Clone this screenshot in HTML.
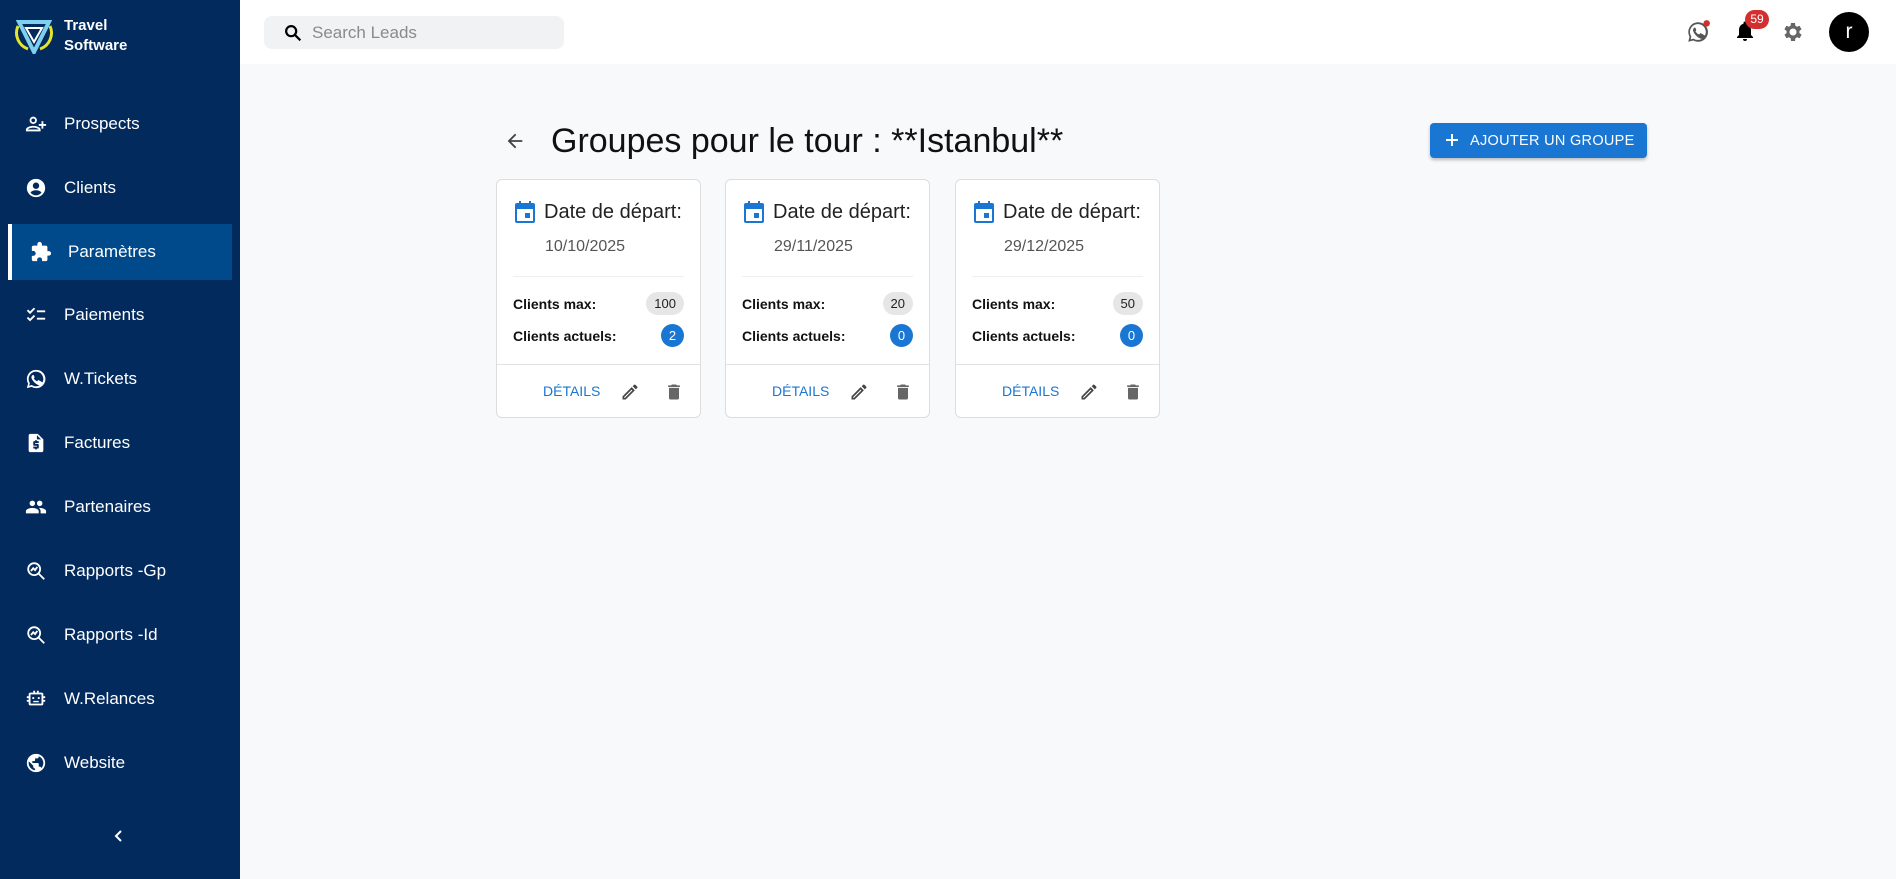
<!DOCTYPE html>
<html><head><meta charset="utf-8"><style>
*{box-sizing:border-box;margin:0;padding:0}
body{width:1896px;height:879px;overflow:hidden;font-family:"Liberation Sans",Arial,sans-serif;background:#f8f9fb;position:relative}
.sb{position:absolute;left:0;top:0;width:240px;height:879px;background:#022a5c;color:#fff}
.logo{position:absolute;left:14px;top:14px}
.brand{position:absolute;left:64px;top:16px;font-weight:bold;font-size:15px;line-height:20px}
.nav{position:absolute;left:0;width:240px;height:56px;display:flex;align-items:center}
.nav svg{position:absolute;left:25px;width:22px;height:22px;fill:#fff}
.nav span{position:absolute;left:64px;font-size:17px}
.act{left:8px;width:224px;background:#004a8b;border-left:4px solid #fff}
.act svg{left:18px}.act span{left:56px}
.hdr{position:absolute;left:240px;top:0;right:0;height:64px;background:#fff}
.search{position:absolute;left:264px;top:16px;width:300px;height:33px;background:#f1f2f4;border-radius:8px}
.search span{position:absolute;left:48px;top:7px;font-size:17px;color:#8a8a8a}
.title{position:absolute;left:551px;top:122px;font-size:34px;color:#111}
.btn{position:absolute;left:1430px;top:123px;width:217px;height:35px;background:#1976d2;border-radius:4px;color:#fff;font-size:14.5px;box-shadow:0 2px 3px rgba(0,0,0,.25)}
.btn span{position:absolute;left:40px;top:10px;letter-spacing:.3px}
.card{position:absolute;top:179px;width:205px;height:239px;background:#fff;border:1px solid #ddd;border-radius:6px}
.card .cal{position:absolute;left:18px;top:21px}
.card .dl{position:absolute;left:47px;top:21px;font-size:20px;color:#222}
.card .dt{position:absolute;left:48px;top:58px;font-size:16px;color:#555}
.card .hr1{position:absolute;left:16px;right:16px;top:96px;border-top:1px solid #eee}
.card .l{position:absolute;left:16px;font-weight:bold;font-size:14px;color:#111}
.chip{position:absolute;right:16px;height:23px;border-radius:12px;font-size:13px;text-align:center;line-height:23px}
.g{background:#e6e6e6;color:#222;padding:0 8px}
.b{background:#1976d2;color:#fff;width:23px}
.card .hr2{position:absolute;left:0;right:0;top:184px;border-top:1px solid #e2e2e2}
.card .det{position:absolute;left:46px;top:203px;font-size:14px;color:#1976d2}
.card .pen{position:absolute;left:123px;top:202px}
.card .tr{position:absolute;left:167px;top:202px}
</style></head><body>
<div class="sb">
<svg class="logo" width="40" height="40" viewBox="0 0 40 40"><path d="M4 12 A17 17 0 0 0 14 35" stroke="#e5e52a" stroke-width="3" fill="none"/><path d="M36 12 A17 17 0 0 1 26 35" stroke="#e5e52a" stroke-width="3" fill="none"/><path d="M5 8 L35 8 L20 38 Z" fill="none" stroke="#7fd0ee" stroke-width="4"/><path d="M12 14 L28 14 L20 28Z" fill="#022a5c" stroke="#fff" stroke-width="2"/></svg>
<div class="brand">Travel<br>Software</div>
<div class="nav" style="top:96px"><svg viewBox="0 0 24 24"><path d="M9 12a4 4 0 1 0 0-8 4 4 0 0 0 0 8zm0-6a2 2 0 1 1 0 4 2 2 0 0 1 0-4zm0 8c-2.7 0-8 1.3-8 4v2h16v-2c0-2.7-5.3-4-8-4zm-6 4c.2-.7 3.3-2 6-2s5.8 1.3 6 2H3zm17-6V9h-2v3h-3v2h3v3h2v-3h3v-2z"/></svg><span>Prospects</span></div>
<div class="nav" style="top:160px"><svg viewBox="0 0 24 24"><path d="M12 2a10 10 0 1 0 0 20 10 10 0 0 0 0-20zm0 4a3.5 3.5 0 1 1 0 7 3.5 3.5 0 0 1 0-7zm0 14c-2.5 0-4.7-1.3-6-3.2 1.3-1.5 4-2.3 6-2.3s4.7.8 6 2.3c-1.3 1.9-3.5 3.2-6 3.2z"/></svg><span>Clients</span></div>
<div class="nav act" style="top:224px"><svg viewBox="0 0 24 24"><path d="M20.5 11H19V7a2 2 0 0 0-2-2h-4V3.5a2.5 2.5 0 0 0-5 0V5H4a2 2 0 0 0-2 2v3.8h1.5a2.7 2.7 0 0 1 0 5.4H2V20a2 2 0 0 0 2 2h3.8v-1.5a2.7 2.7 0 0 1 5.4 0V22H17a2 2 0 0 0 2-2v-4h1.5a2.5 2.5 0 0 0 0-5z"/></svg><span>Paramètres</span></div>
<div class="nav" style="top:287px"><svg viewBox="0 0 24 24"><path d="M22 7h-9v2h9V7zm0 8h-9v2h9v-2zM5.5 11 2 7.5 3.4 6l2.1 2.1 4.2-4.2 1.4 1.4-5.6 5.7zm0 8L2 15.5 3.4 14l2.1 2.1 4.2-4.2 1.4 1.4-5.6 5.7z"/></svg><span>Paiements</span></div>
<div class="nav" style="top:351px"><svg viewBox="0 0 24 24"><path d="M12 2a10 10 0 0 0-8.6 15L2 22l5.2-1.4A10 10 0 1 0 12 2zm0 18a8 8 0 0 1-4.2-1.2l-.3-.2-3 .8.8-3-.2-.3A8 8 0 1 1 12 20zm4.4-6c-.2-.1-1.4-.7-1.7-.8-.2-.1-.4-.1-.5.1l-.8 1c-.1.2-.3.2-.5.1a6.5 6.5 0 0 1-3.2-2.8c-.2-.4.2-.4.7-1.3.1-.2 0-.3 0-.4l-.8-1.8c-.2-.5-.4-.4-.5-.4h-.5a.9.9 0 0 0-.7.3A2.8 2.8 0 0 0 7 10c0 1.6 1.2 3.2 1.3 3.4.2.2 2.3 3.5 5.5 4.9 2 .9 2.8.9 3.8.8.6-.1 1.800-.8 2-1.5.3-.7.3-1.3.2-1.5l-.4-.1z"/></svg><span>W.Tickets</span></div>
<div class="nav" style="top:415px"><svg viewBox="0 0 24 24"><path d="M14 2H6a2 2 0 0 0-2 2v16a2 2 0 0 0 2 2h12a2 2 0 0 0 2-2V8l-6-6zm1 10h-4v1h3a1 1 0 0 1 1 1v3a1 1 0 0 1-1 1h-1v1h-2v-1H9v-2h4v-1h-3a1 1 0 0 1-1-1v-3a1 1 0 0 1 1-1h1V9h2v1h2v2zm-2-4V3.5L17.5 8H13z"/></svg><span>Factures</span></div>
<div class="nav" style="top:479px"><svg viewBox="0 0 24 24"><path d="M16 11a3 3 0 1 0 0-6 3 3 0 0 0 0 6zm-8 0a3 3 0 1 0 0-6 3 3 0 0 0 0 6zm0 2c-2.3 0-7 1.2-7 3.5V19h14v-2.5C15 14.2 10.3 13 8 13zm8 0h-1c1.2.8 2 2 2 3.5V19h6v-2.5c0-2.3-4.7-3.5-7-3.5z"/></svg><span>Partenaires</span></div>
<div class="nav" style="top:543px"><svg viewBox="0 0 24 24" style="fill:none" stroke="#fff" stroke-width="2"><circle cx="10" cy="10" r="6.5"/><path d="M15 15l6 6M6.5 12l2.5-3 2 2 2.5-3.5"/></svg><span>Rapports -Gp</span></div>
<div class="nav" style="top:607px"><svg viewBox="0 0 24 24" style="fill:none" stroke="#fff" stroke-width="2"><circle cx="10" cy="10" r="6.5"/><path d="M15 15l6 6M6.5 12l2.5-3 2 2 2.5-3.5"/></svg><span>Rapports -Id</span></div>
<div class="nav" style="top:671px"><svg viewBox="0 0 24 24"><path d="M20 9V7a2 2 0 0 0-2-2h-3V3h-2v2h-2V3H9v2H6a2 2 0 0 0-2 2v2H2v2h2v2H2v2h2v2a2 2 0 0 0 2 2h12a2 2 0 0 0 2-2v-2h2v-2h-2v-2h2V9h-2zm-2 8H6V7h12v10zM8 10h2v2H8zm6 0h2v2h-2zm-5 4h6v1.5H9z"/></svg><span>W.Relances</span></div>
<div class="nav" style="top:735px"><svg viewBox="0 0 24 24"><path d="M12 2a10 10 0 1 0 0 20 10 10 0 0 0 0-20zm-1 17.9A8 8 0 0 1 4 12c0-.6.1-1.2.2-1.8L9 15v1a2 2 0 0 0 2 2v1.9zm6.9-2.5A2 2 0 0 0 16 16h-1v-3a1 1 0 0 0-1-1H8v-2h2a1 1 0 0 0 1-1V7h2a2 2 0 0 0 2-2v-.4a8 8 0 0 1 2.9 12.8z"/></svg><span>Website</span></div>
<svg style="position:absolute;left:112px;top:829px" width="14" height="14" viewBox="0 0 14 14"><path d="M9 2 4 7l5 5" stroke="#fff" stroke-width="2" fill="none"/></svg>
</div>
<div class="hdr"></div>
<div class="search"><svg style="position:absolute;left:18px;top:6px" width="22" height="22" viewBox="0 0 24 24" fill="none" stroke="#000" stroke-width="2.4"><circle cx="10" cy="10" r="5.5"/><path d="M14 14l6 6"/></svg><span>Search Leads</span></div>
<svg style="position:absolute;left:1685px;top:19px" width="26" height="26" viewBox="0 0 24 24"><path fill="#555" d="M12 3a9 9 0 0 0-7.8 13.4L3 21l4.7-1.2A9 9 0 1 0 12 3zm0 16.3a7.3 7.3 0 0 1-3.8-1l-.3-.2-2.7.7.7-2.6-.2-.3A7.3 7.3 0 1 1 12 19.3zm4-5.5c-.2-.1-1.3-.7-1.5-.7-.2-.1-.4-.1-.5.1l-.7.9c-.1.2-.3.2-.5.1a6 6 0 0 1-3-2.6c-.2-.4.2-.4.6-1.2.1-.1 0-.3 0-.4l-.7-1.6c-.2-.4-.4-.4-.5-.4h-.4a.8.8 0 0 0-.6.3 2.5 2.5 0 0 0-.8 1.9c0 1.4 1.1 2.9 1.2 3.1.1.2 2.1 3.2 5 4.5 1.9.8 2.6.7 3.4.5.6-.1 1.6-.7 1.8-1.3.2-.6.2-1.2.2-1.3l-.5-.4z"/><circle cx="20" cy="4" r="3" fill="#d32f2f"/></svg>
<svg style="position:absolute;left:1733px;top:19px" width="24" height="24" viewBox="0 0 24 24"><path d="M12 22a2 2 0 0 0 2-2h-4a2 2 0 0 0 2 2zm6-6v-5c0-3-1.6-5.6-4.5-6.3V4a1.5 1.5 0 0 0-3 0v.7C7.6 5.4 6 8 6 11v5l-2 2v1h16v-1l-2-2z"/></svg>
<div style="position:absolute;left:1745px;top:10px;width:24px;height:19px;border-radius:10px;background:#d32f2f;color:#fff;font-size:12px;text-align:center;line-height:19px">59</div>
<svg style="position:absolute;left:1781px;top:20px" width="24" height="24" viewBox="0 0 24 24"><path fill="#666" d="M19.4 13a7.5 7.5 0 0 0 0-2l2.1-1.7-2-3.5-2.5 1a7.3 7.3 0 0 0-1.7-1L15 3h-4l-.4 2.7a7.3 7.3 0 0 0-1.7 1l-2.5-1-2 3.5L6.6 11a7.5 7.5 0 0 0 0 2l-2.1 1.7 2 3.5 2.5-1c.5.4 1.1.7 1.7 1L11 21h4l.4-2.7c.6-.3 1.2-.6 1.7-1l2.5 1 2-3.5L19.4 13zM13 15.5a3.5 3.5 0 1 1 0-7 3.5 3.5 0 0 1 0 7z" transform="translate(-1 0)"/></svg>
<div style="position:absolute;left:1829px;top:12px;width:40px;height:40px;border-radius:50%;background:#000;color:#fff;font-size:21px;text-align:center;line-height:40px">r</div>
<svg style="position:absolute;left:504px;top:130px" width="22" height="22" viewBox="0 0 24 24"><path d="M20 11H7.8l5.6-5.6L12 4l-8 8 8 8 1.4-1.4L7.8 13H20z" fill="#444"/></svg>
<div class="title">Groupes pour le tour : **Istanbul**</div>
<div class="btn"><svg style="position:absolute;left:14px;top:9px" width="16" height="16" viewBox="0 0 16 16"><path d="M8 2v12M2 8h12" stroke="#fff" stroke-width="2"/></svg><span>AJOUTER UN GROUPE</span></div>

<div class="card" style="left:496px">
<svg class="cal" width="20" height="22" viewBox="0 0 20 22"><path fill="#1976d2" d="M4 0h2v2h8V0h2v2h2a2 2 0 0 1 2 2v16a2 2 0 0 1-2 2H2a2 2 0 0 1-2-2V4a2 2 0 0 1 2-2h2zM2 8v12h16V8zm8 4h5v5h-5z"/></svg>
<div class="dl">Date de départ:</div><div class="dt">10/10/2025</div><div class="hr1"></div>
<div class="l" style="top:116px">Clients max:</div><div class="chip g" style="top:112px">100</div>
<div class="l" style="top:148px">Clients actuels:</div><div class="chip b" style="top:144px">2</div>
<div class="hr2"></div><div class="det">DÉTAILS</div>
<svg class="pen" width="20" height="20" viewBox="0 0 24 24"><path fill="#444" d="M3 17.2V21h3.8L17.8 10l-3.8-3.8L3 17.2zM5.9 19H5v-.9l9-9 .9.9-9 9zM20.7 7a1 1 0 0 0 0-1.4l-2.3-2.3a1 1 0 0 0-1.4 0l-1.8 1.8 3.8 3.8L20.7 7z"/></svg>
<svg class="tr" width="20" height="20" viewBox="0 0 24 24"><path fill="#666" d="M6 19a2 2 0 0 0 2 2h8a2 2 0 0 0 2-2V7H6v12zM19 4h-3.5l-1-1h-5l-1 1H5v2h14V4z"/></svg>
</div>
<div class="card" style="left:725px">
<svg class="cal" width="20" height="22" viewBox="0 0 20 22"><path fill="#1976d2" d="M4 0h2v2h8V0h2v2h2a2 2 0 0 1 2 2v16a2 2 0 0 1-2 2H2a2 2 0 0 1-2-2V4a2 2 0 0 1 2-2h2zM2 8v12h16V8zm8 4h5v5h-5z"/></svg>
<div class="dl">Date de départ:</div><div class="dt">29/11/2025</div><div class="hr1"></div>
<div class="l" style="top:116px">Clients max:</div><div class="chip g" style="top:112px">20</div>
<div class="l" style="top:148px">Clients actuels:</div><div class="chip b" style="top:144px">0</div>
<div class="hr2"></div><div class="det">DÉTAILS</div>
<svg class="pen" width="20" height="20" viewBox="0 0 24 24"><path fill="#444" d="M3 17.2V21h3.8L17.8 10l-3.8-3.8L3 17.2zM5.9 19H5v-.9l9-9 .9.9-9 9zM20.7 7a1 1 0 0 0 0-1.4l-2.3-2.3a1 1 0 0 0-1.4 0l-1.8 1.8 3.8 3.8L20.7 7z"/></svg>
<svg class="tr" width="20" height="20" viewBox="0 0 24 24"><path fill="#666" d="M6 19a2 2 0 0 0 2 2h8a2 2 0 0 0 2-2V7H6v12zM19 4h-3.5l-1-1h-5l-1 1H5v2h14V4z"/></svg>
</div>
<div class="card" style="left:955px">
<svg class="cal" width="20" height="22" viewBox="0 0 20 22"><path fill="#1976d2" d="M4 0h2v2h8V0h2v2h2a2 2 0 0 1 2 2v16a2 2 0 0 1-2 2H2a2 2 0 0 1-2-2V4a2 2 0 0 1 2-2h2zM2 8v12h16V8zm8 4h5v5h-5z"/></svg>
<div class="dl">Date de départ:</div><div class="dt">29/12/2025</div><div class="hr1"></div>
<div class="l" style="top:116px">Clients max:</div><div class="chip g" style="top:112px">50</div>
<div class="l" style="top:148px">Clients actuels:</div><div class="chip b" style="top:144px">0</div>
<div class="hr2"></div><div class="det">DÉTAILS</div>
<svg class="pen" width="20" height="20" viewBox="0 0 24 24"><path fill="#444" d="M3 17.2V21h3.8L17.8 10l-3.8-3.8L3 17.2zM5.9 19H5v-.9l9-9 .9.9-9 9zM20.7 7a1 1 0 0 0 0-1.4l-2.3-2.3a1 1 0 0 0-1.4 0l-1.8 1.8 3.8 3.8L20.7 7z"/></svg>
<svg class="tr" width="20" height="20" viewBox="0 0 24 24"><path fill="#666" d="M6 19a2 2 0 0 0 2 2h8a2 2 0 0 0 2-2V7H6v12zM19 4h-3.5l-1-1h-5l-1 1H5v2h14V4z"/></svg>
</div>
</body></html>
